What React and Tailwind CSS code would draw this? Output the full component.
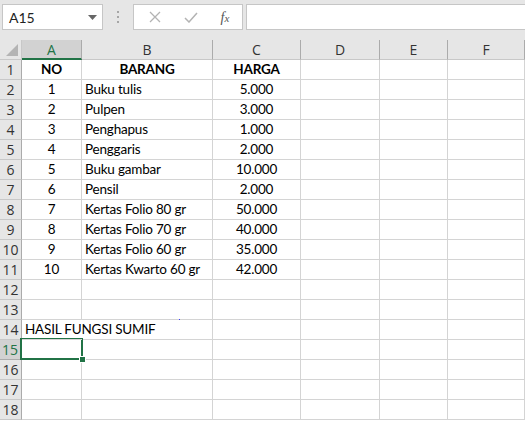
import React from "react";

const cols = ["A", "B", "C", "D", "E", "F"];

const data = [
  ["NO", "BARANG", "HARGA"],
  ["1", "Buku tulis", "5.000"],
  ["2", "Pulpen", "3.000"],
  ["3", "Penghapus", "1.000"],
  ["4", "Penggaris", "2.000"],
  ["5", "Buku gambar", "10.000"],
  ["6", "Pensil", "2.000"],
  ["7", "Kertas Folio 80 gr", "50.000"],
  ["8", "Kertas Folio 70 gr", "40.000"],
  ["9", "Kertas Folio 60 gr", "35.000"],
  ["10", "Kertas Kwarto 60 gr", "42.000"],
];

const rowCount = 18;

function FormulaBar() {
  return (
    <div className="h-[40px] bg-[#e6e6e6] flex items-start pt-[4px] pl-[2px]">
      {/* name box */}
      <div className="w-[101px] h-[26px] bg-white border border-[#c6c6c6] flex items-center justify-between pl-[6px] pr-[5px]">
        <span className="text-[14px] text-[#222]">A15</span>
        <svg width="9" height="5" viewBox="0 0 9 5">
          <path d="M0 0 L9 0 L4.5 5 Z" fill="#666" />
        </svg>
      </div>
      {/* dots */}
      <div className="w-[30px] h-[26px] flex flex-col items-center justify-center gap-[3px]">
        <div className="w-[2px] h-[2px] bg-[#a6a6a6]" />
        <div className="w-[2px] h-[2px] bg-[#a6a6a6]" />
        <div className="w-[2px] h-[2px] bg-[#a6a6a6]" />
      </div>
      {/* buttons */}
      <div className="w-[110px] h-[26px] bg-white border border-[#c6c6c6] flex items-center">
        <div className="w-[37px] flex justify-center pl-[4px]">
          <svg width="12" height="12" viewBox="0 0 12 12">
            <path d="M1 1 L11 11 M11 1 L1 11" stroke="#b3b3b3" strokeWidth="1.3" />
          </svg>
        </div>
        <div className="w-[35px] flex justify-center pl-[4px]">
          <svg width="14" height="11" viewBox="0 0 14 11">
            <path d="M1 6 L5 10 L13 1" stroke="#b3b3b3" strokeWidth="1.5" fill="none" />
          </svg>
        </div>
        <div className="w-[36px] flex justify-center pl-[2px]">
          <span className="text-[14px] italic text-[#555] [font-family:'Liberation_Serif',serif]">
            f<span className="text-[11px]">x</span>
          </span>
        </div>
      </div>
      <div className="w-[3px]" />
      <div className="flex-1 h-[26px] bg-white border border-[#c6c6c6] border-r-0" />
    </div>
  );
}

function Cell({ children, className = "" }) {
  return (
    <div
      className={`h-[20px] border-r border-b border-[#d4d4d4] flex items-center overflow-visible whitespace-nowrap text-[13.5px] tracking-[-0.2px] text-black ${className}`}
    >
      {children}
    </div>
  );
}

export default function App() {
  const rows = Array.from({ length: rowCount }, (_, i) => i + 1);

  return (
    <div className="w-[525px] h-[423px] overflow-hidden bg-white relative [font-family:Lato,'Liberation_Sans',sans-serif]">
      <FormulaBar />

      <div className="grid grid-cols-[22px_60px_131px_88px_79px_68px_1fr]">
        {/* column header row */}
        <div className="h-[20px] bg-[#e6e6e6] border-r border-b border-[#c8c8c8] relative">
          <svg className="absolute right-[3px] bottom-[3px]" width="12" height="12" viewBox="0 0 12 12">
            <path d="M12 0 L12 12 L0 12 Z" fill="#b4b4b4" />
          </svg>
        </div>
        {cols.map((c) => (
          <div
            key={c}
            className={`h-[20px] flex items-center justify-center text-[14px] border-r [font-family:'Open_Sans',sans-serif] ${
              c === "A"
                ? "bg-[#d2d2d2] text-[#217346] border-b-2 border-b-[#217346] border-r-[#ababab]"
                : "bg-[#e6e6e6] text-[#333] border-b border-[#c8c8c8] border-r-[#ababab]"
            }`}
          >
            {c}
          </div>
        ))}

        {rows.map((r) => {
          const d = data[r - 1];
          const bold = r === 1 ? "font-bold" : "";
          const selected = r === 15;
          return (
            <React.Fragment key={r}>
              <div
                className={`h-[20px] flex items-center justify-center text-[14px] border-b border-r [font-family:'Open_Sans',sans-serif] ${
                  selected
                    ? "bg-[#d2d2d2] text-[#217346] border-b-[#ababab] border-r-2 border-r-[#217346]"
                    : "bg-[#e6e6e6] text-[#333] border-[#ababab] border-b-[#c8c8c8]"
                }`}
              >
                {r}
              </div>
              {d ? (
                <>
                  <Cell className={`justify-center ${bold}`}>{d[0]}</Cell>
                  <Cell className={r === 1 ? "justify-center font-bold" : "pl-[3px]"}>{d[1]}</Cell>
                  <Cell className={`justify-center ${bold}`}>{d[2]}</Cell>
                </>
              ) : r === 14 ? (
                <>
                  <Cell className="pl-[3px] border-r-0 relative z-10">HASIL FUNGSI SUMIF</Cell>
                  <Cell />
                  <Cell />
                </>
              ) : (
                <>
                  <Cell />
                  <Cell />
                  <Cell />
                </>
              )}
              <Cell />
              <Cell />
              <Cell />
            </React.Fragment>
          );
        })}
      </div>

      {/* active cell selection A15 */}
      <div className="absolute left-[20px] top-[338px] w-[63px] h-[22px] border-2 border-[#217346] pointer-events-none" />
      <div className="absolute left-[80px] top-[357px] w-[5px] h-[5px] bg-[#217346] border border-white box-content -translate-x-[1px] -translate-y-[1px]" />

      {/* stray cursor dot */}
      <div className="absolute left-[179px] top-[319px] w-[1px] h-[1px] bg-[#3b3bff]" />
    </div>
  );
}
